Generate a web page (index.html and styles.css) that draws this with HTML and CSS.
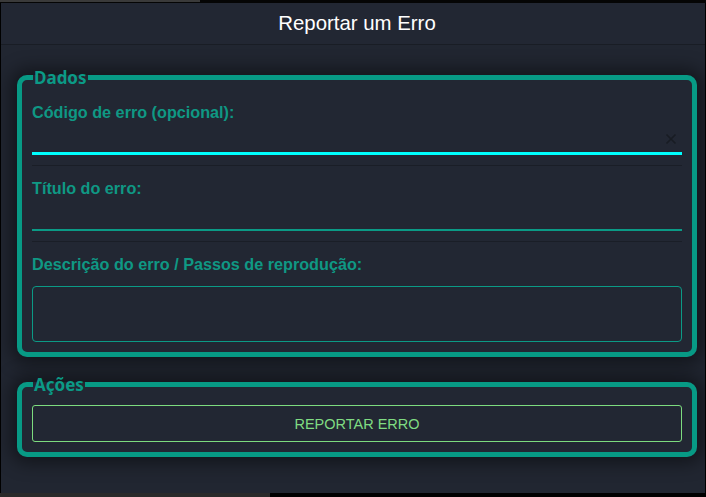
FILE: index.html
```html
<!DOCTYPE html>
<html lang="pt">
<head>
<meta charset="utf-8">
<title>Reportar um Erro</title>
<link rel="stylesheet" href="styles.css">
</head>
<body>
<div class="topbar"><div class="topbar-fill"></div></div>
<div class="dialog">
  <div class="dialog-header">Reportar um Erro</div>
  <div class="dialog-body">
    <fieldset class="group">
      <legend>Dados</legend>
      <div class="field">
        <label class="field-label">Código de erro (opcional):</label>
        <div class="input input-focus">
          <svg class="clear-icon" width="12" height="12" viewBox="0 0 12 12"><path d="M1.5 1.5 L10.5 10.5 M10.5 1.5 L1.5 10.5" stroke="#181c23" stroke-width="1.6" fill="none"/></svg>
        </div>
        <div class="divider"></div>
      </div>
      <div class="field">
        <label class="field-label">Título do erro:</label>
        <div class="input input-plain"></div>
        <div class="divider"></div>
      </div>
      <div class="field">
        <label class="field-label">Descrição do erro / Passos de reprodução:</label>
        <div class="textarea"></div>
      </div>
    </fieldset>
    <fieldset class="group group-actions">
      <legend>Ações</legend>
      <button class="btn">REPORTAR ERRO</button>
    </fieldset>
  </div>
</div>
<div class="bottombar"><div class="bottombar-fill"></div></div>
</body>
</html>
```
FILE: styles.css
```css
html, body {
  margin: 0;
  padding: 0;
  background: #000;
  height: 497px;
  overflow: hidden;
}
body {
  font-family: "Liberation Sans", Arial, sans-serif;
}
.topbar {
  height: 3px;
  background: #050505;
}
.topbar-fill {
  width: 200px;
  height: 2px;
  background: #3a3a3a;
}
.dialog {
  margin-left: 1px;
  width: 704px;
  height: 490px;
  background: #212631;
  display: flex;
  flex-direction: column;
}
.dialog-header {
  height: 41px;
  padding-left: 8px;
  border-bottom: 1px solid #191d25;
  color: #ffffff;
  font-size: 20.4px;
  line-height: 40px;
  text-align: center;
  background: #222733;
}
.dialog-body {
  padding: 22px 8px 0 16px;
}
.group {
  margin: 0;
  width: 680px;
  box-sizing: border-box;
  border: 5px solid #079a85;
  border-radius: 10px;
  padding: 15px 10px 10px 10px;
  background: #222733;
  box-shadow: 0 0 18px 6px rgba(0, 0, 0, 0.45);
}
.group legend {
  font-family: "Noto Sans", Lato, sans-serif;
  font-weight: 700;
  font-size: 17px;
  line-height: 21px;
  color: #0b9a86;
  padding: 0 1px;
  margin-left: 1px;
}
.field {
  display: flex;
  flex-direction: column;
}
.field-label {
  font-weight: 700;
  font-size: 16.2px;
  line-height: 18px;
  color: #0f9884;
}
.input {
  position: relative;
  box-sizing: border-box;
}
.input-focus {
  height: 34px;
  border-bottom: 3px solid #00ffff;
}
.input-plain {
  height: 34px;
  border-bottom: 2px solid #0b9a86;
}
.clear-icon {
  position: absolute;
  right: 5px;
  top: 12px;
}
.divider {
  height: 1px;
  background: #1a1e27;
  margin: 10px 0 13px;
}
.textarea {
  margin-top: 13px;
  height: 56px;
  box-sizing: border-box;
  border: 1px solid #0b9a86;
  border-radius: 4px;
}
.group-actions {
  margin-top: 17px;
  padding-top: 10px;
}
.btn {
  display: block;
  width: 100%;
  height: 37px;
  box-sizing: border-box;
  background: transparent;
  border: 1px solid #7ddc7f;
  border-radius: 3px;
  color: #7fdb82;
  font-family: "Liberation Sans", Arial, sans-serif;
  font-size: 14.5px;
}
.bottombar {
  height: 4px;
  background: #000;
}
.bottombar-fill {
  width: 270px;
  height: 4px;
  background: #2a2a2a;
}
```
